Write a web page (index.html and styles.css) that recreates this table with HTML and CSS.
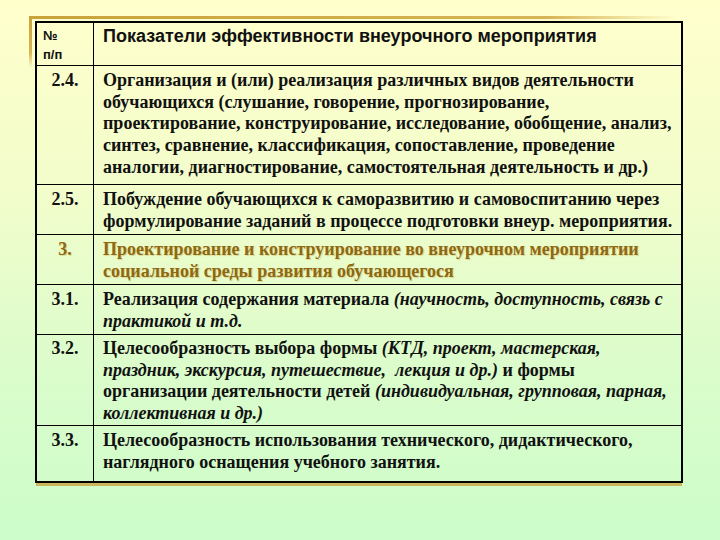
FILE: index.html
```html
<!DOCTYPE html>
<html lang="ru">
<head>
<meta charset="utf-8">
<link rel="stylesheet" href="styles.css">
</head>
<body>
<div class="frame">
<table class="grid">
<tr class="head">
<td class="num">№<br>п/п</td>
<td class="txt">Показатели эффективности внеурочного мероприятия</td>
</tr>
<tr class="r24">
<td class="num">2.4.</td>
<td class="txt">Организация и (или) реализация различных видов деятельности<br>обучающихся (слушание, говорение, прогнозирование,<br>проектирование, конструирование, исследование, обобщение, анализ,<br>синтез, сравнение, классификация, сопоставление, проведение<br>аналогии, диагностирование, самостоятельная деятельность и др.)</td>
</tr>
<tr class="r2">
<td class="num">2.5.</td>
<td class="txt">Побуждение обучающихся к саморазвитию и самовоспитанию через<br>формулирование заданий в процессе подготовки внеур. мероприятия.</td>
</tr>
<tr class="r2 gold">
<td class="num">3.</td>
<td class="txt">Проектирование и конструирование во внеурочном мероприятии<br>социальной среды развития обучающегося</td>
</tr>
<tr class="r2">
<td class="num">3.1.</td>
<td class="txt">Реализация содержания материала <i>(научность, доступность, связь с<br>практикой и т.д.</i></td>
</tr>
<tr class="r32">
<td class="num">3.2.</td>
<td class="txt">Целесообразность выбора формы <i>(КТД, проект, мастерская,<br>праздник, экскурсия, путешествие, &nbsp;лекция и др.)</i> и формы<br>организации деятельности детей <i>(индивидуальная, групповая, парная,<br>коллективная и др.)</i></td>
</tr>
<tr class="r33">
<td class="num">3.3.</td>
<td class="txt">Целесообразность использования технического, дидактического,<br>наглядного оснащения учебного занятия.</td>
</tr>
</table>
</div>
</body>
</html>
```
FILE: styles.css
```css
html, body {
  margin: 0;
  padding: 0;
}
body {
  width: 720px;
  height: 540px;
  background: linear-gradient(180deg, #ffffcc 0%, #f2fdcb 35%, #dafccb 70%, #ccfdca 100%);
  overflow: hidden;
}
.frame {
  position: relative;
  width: 648px;
  margin: 21px 0 0 35px;
}
.frame::before {
  content: "";
  position: absolute;
  left: -6px;
  top: -5px;
  width: 648px;
  height: 3px;
  background: linear-gradient(90deg, #c9a23a 0%, #d8b456 80%, rgba(230,200,120,0) 100%);
}
.frame::after {
  content: "";
  position: absolute;
  left: -6px;
  top: -5px;
  width: 3px;
  height: 52px;
  background: linear-gradient(180deg, #c9a23a 0%, #d8b456 70%, rgba(230,200,120,0) 100%);
}
.grid {
  position: relative;
  border-collapse: collapse;
  width: 648px;
  border: 2px solid #000;
  box-shadow: 0 4px 0 -1px #c9b55a;
  color: #111;
}
.grid td {
  font-family: "Liberation Serif", "Times New Roman", serif;
  font-weight: bold;
  font-size: 18px;
  border: 1px solid #000;
  vertical-align: top;
  padding: 0;
  line-height: 21.7px;
}
.grid td.num {
  width: 56px;
  text-align: center;
}
.grid td.txt {
  padding-left: 9px;
  white-space: nowrap;
}
.grid .head td {
  height: 39px;
  font-family: "Liberation Sans", Arial, sans-serif;
}
.grid .head td.num {
  text-align: left;
  padding-left: 6px;
  width: 50px;
  font-size: 13px;
  line-height: 19px;
  padding-top: 3px;
}
.grid .head td.txt {
  font-size: 18px;
  padding-top: 3px;
}
.r24 td {
  height: 114px;
  padding-top: 4px;
}
.r2 td {
  height: 45px;
  padding-top: 4px;
}
.r32 td {
  height: 86px;
  padding-top: 3px;
}
.r33 td {
  height: 51px;
  padding-top: 4px;
}
.grid .gold td {
  color: #8e6812;
  text-shadow: 1px 1px 1px rgba(200, 170, 80, 0.45);
}
.grid i {
  font-style: italic;
}
```
